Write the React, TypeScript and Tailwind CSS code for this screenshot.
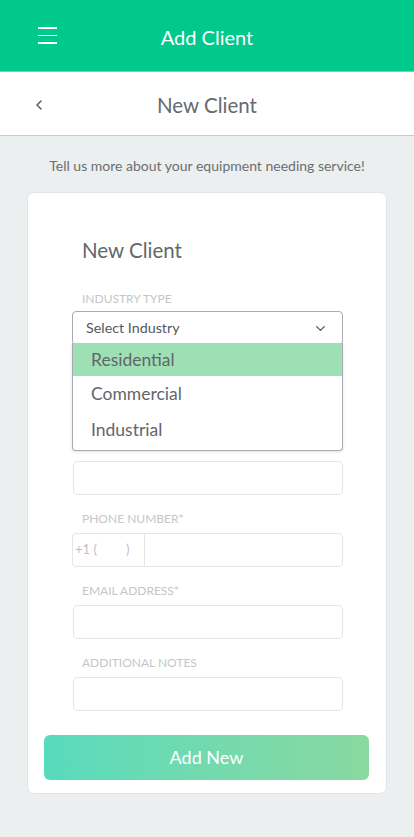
import { ChevronDown, ChevronLeft } from "lucide-react"

const font = { fontFamily: "Lato, 'Noto Sans', sans-serif" }

function Label({ text, className = "" }: { text: string; className?: string }) {
  return (
    <div className={`h-[14px] pl-[9px] text-[12px] leading-[14px] text-[#c4c7ca] ${className}`}>
      {text}
    </div>
  )
}

function Field({ label, top = "mt-[17px]" }: { label: string; top?: string }) {
  return (
    <div>
      <Label text={label} className={top} />
      <div className="mt-[7px] h-[34px] rounded-[4px] border border-[#e3e5e7] bg-white" />
    </div>
  )
}

export default function App() {
  return (
    <div className="min-h-[837px] bg-[#ebeff0]" style={font}>
      <header className="flex h-[72px] items-center border-b border-[#63dcb5] bg-[#00c98b] px-[38px]">
        <div className="flex w-[19px] flex-col gap-[6px]">
          <span className="h-[1.5px] bg-white" />
          <span className="h-[1.5px] bg-white" />
          <span className="h-[1.5px] bg-white" />
        </div>
        <h1 className="flex-1 pr-[19px] pt-[2px] text-center text-[20px] text-white">Add Client</h1>
      </header>

      <div className="flex h-[64px] items-center border-b border-[#c9cbcd] bg-white px-[31px] pt-[3px]">
        <ChevronLeft className="size-[16px] text-[#5f6368]" strokeWidth={2.4} />
        <h2 className="flex-1 pr-[16px] text-center text-[20.5px] text-[#666a6e]">New Client</h2>
      </div>

      <p className="pt-[19px] text-center text-[14px] text-[#6b6e71]">
        Tell us more about your equipment needing service!
      </p>

      <div className="mx-[27px] mt-[16px] rounded-[7px] border border-[#e2e5e7] bg-white pb-[13px] pt-[44px]">
        <div className="ml-[45px] w-[270px]">
          <h3 className="pl-[9px] text-[20.5px] leading-[26px] text-[#63676b]">New Client</h3>

          <Label text="INDUSTRY TYPE" className="mt-[29px]" />
          <div className="relative mt-[5px] -ml-px">
            <div className="flex h-[34px] items-center justify-between rounded-[4px] border border-[#a9acaf] bg-white pl-[13px] pr-[14px] text-[14.3px] text-[#55595c]">
              <span>Select Industry</span>
              <ChevronDown className="size-[15px] text-[#55595c]" strokeWidth={2.2} />
            </div>
            <ul className="absolute left-0 right-0 top-[32px] z-10 rounded-b-[4px] border border-t-0 border-[#a9acaf] bg-white pb-[3px] text-[17.5px] text-[#62666a] shadow-[0_1px_3px_rgba(0,0,0,0.12)]">
              <li className="flex h-[33px] items-center bg-[#9ee0b4] pl-[18px] pt-[2px]">Residential</li>
              <li className="flex h-[34px] items-center pl-[18px] pt-[2px]">Commercial</li>
              <li className="flex h-[37px] items-center pl-[18px] pt-[3px]">Industrial</li>
            </ul>
          </div>

          <Field label="CLIENT NAME*" top="mt-[19px]" />
          <Field label="ADDRESS" top="mt-[21px]" />

          <div>
            <Label text="PHONE NUMBER*" className="mt-[17px]" />
            <div className="mt-[7px] -ml-px flex h-[34px] rounded-[4px] border border-[#e3e5e7] bg-white">
              <div className="flex w-[72px] items-center border-r border-[#e3e5e7] pl-[2px] text-[13px] text-[#c0c3c6]">
                <span>+1 (</span>
                <span className="ml-[29px]">)</span>
              </div>
            </div>
          </div>

          <Field label="EMAIL ADDRESS*" />
          <Field label="ADDITIONAL NOTES" />
        </div>

        <button className="mx-[16px] mt-[24px] flex h-[45px] w-[325px] items-center justify-center rounded-[6px] bg-gradient-to-r from-[#56dbbc] to-[#89d8a0] text-[18px] text-white">
          Add New
        </button>
      </div>
    </div>
  )
}
